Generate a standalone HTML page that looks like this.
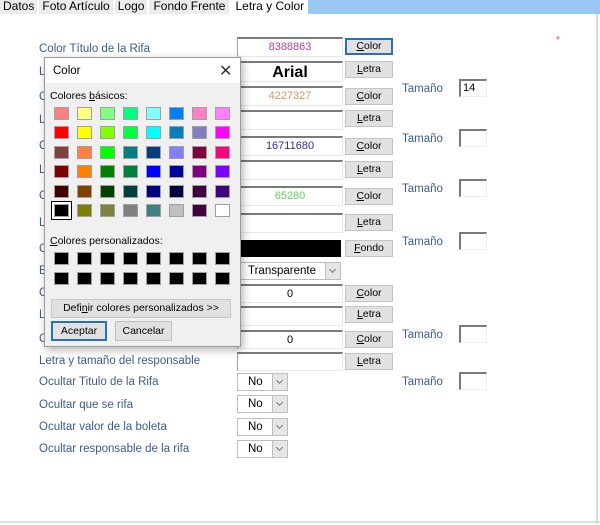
<!DOCTYPE html>
<html><head><meta charset="utf-8"><style>
*{margin:0;padding:0;box-sizing:border-box}
body{width:600px;height:525px;overflow:hidden;background:#fff;font-family:"Liberation Sans",sans-serif;position:relative}
.a{position:absolute}
.lbl{position:absolute;left:39px;font-size:11.5px;color:#3d5b8c;white-space:nowrap}
.box{position:absolute;left:237px;width:106px;background:#fff;border-top:2px solid #7a7a7a;border-left:1px solid #a0a0a0;border-right:1px solid #e8e8e8;border-bottom:1px solid #e8e8e8;font-size:11px;text-align:center;line-height:17px}
.btn{position:absolute;left:345px;width:48px;height:17px;background:#e1e1e1;border:1px solid #c4c4c4;font-size:10.5px;text-align:center;line-height:15px;color:#000}
.tam{position:absolute;left:402px;font-size:11.5px;color:#3d5b8c}
.tb{position:absolute;left:459px;width:28px;height:18px;border-top:2px solid #7a7a7a;border-left:2px solid #7a7a7a;border-right:1px solid #eee;border-bottom:1px solid #eee;background:#fff;font-size:11px;line-height:15px;padding-left:2px}
.sel{position:absolute;left:237px;width:51px;height:18px;border:1px solid #bdbdbd;background:#fff;font-size:11.5px;line-height:16px;padding-left:10px}
.sel i{position:absolute;right:0;top:0;width:15px;height:16px;background:#e6e6e6;border-left:1px solid #bdbdbd}
.sel i:after{content:"";position:absolute;left:4px;top:4px;width:4px;height:4px;border-right:1px solid #777;border-bottom:1px solid #777;transform:rotate(45deg)}
.sw{position:absolute;width:15px;height:13px;border:1px solid #a0a0a0}
</style></head><body>
<!-- tabs -->
<div class="a" style="left:0;top:0;width:600px;height:14px;background:#99c8f5"></div>
<div class="a" style="left:0;top:0;width:296px;height:14px;background:#fff"></div>
<div class="a" style="left:0;top:0;height:14px;font-size:12px;line-height:13px;color:#000;display:flex">
<span style="background:#ececec;padding:0 3px;margin-right:2px;height:14px">Datos</span>
<span style="background:#ececec;padding:0 3px;margin-right:2px">Foto Artículo</span>
<span style="background:#ececec;padding:0 3px;margin-right:2px">Logo</span>
<span style="background:#ececec;padding:0 4px;margin-right:2px">Fondo Frente</span>
<span style="background:#fff;padding:0 4px">Letra y Color</span>
</div>
<div class="a" style="left:596px;top:14px;width:2px;height:510px;background:#c8dcf0"></div>
<div class="a" style="left:0;top:521px;width:600px;height:2px;background:#ddd"></div>
<div class="a" style="left:556px;top:35px;color:#d05060;font-size:10px">*</div>

<!-- labels -->
<div class="lbl" style="top:43px">Color Título de la Rifa</div>
<div class="lbl" style="top:66px">Letra Título de la Rifa</div>
<div class="lbl" style="top:91px">Color que se rifa</div>
<div class="lbl" style="top:114px">Letra que se rifa</div>
<div class="lbl" style="top:140px">Color valor</div>
<div class="lbl" style="top:164px">Letra valor</div>
<div class="lbl" style="top:190px">Color fecha</div>
<div class="lbl" style="top:217px">Letra fecha</div>
<div class="lbl" style="top:243px">Color fondo</div>
<div class="lbl" style="top:265px">Estilo fondo</div>
<div class="lbl" style="top:287px">Color número</div>
<div class="lbl" style="top:309px">Letra número</div>
<div class="lbl" style="top:333px">Color responsable</div>
<div class="lbl" style="top:355px">Letra y tamaño del responsable</div>
<div class="lbl" style="top:376px">Ocultar Titulo de la Rifa</div>
<div class="lbl" style="top:399px">Ocultar que se rifa</div>
<div class="lbl" style="top:421px">Ocultar valor de la boleta</div>
<div class="lbl" style="top:443px">Ocultar responsable de la rifa</div>

<!-- boxes -->
<div class="box" style="top:37px;height:20px;color:#c040a0">8388863</div>
<div class="btn" style="top:38px;border:2px solid #2a70b8;line-height:13px"><u>C</u>olor</div>
<div class="box" style="top:61px;height:21px;font-weight:bold;font-size:16px;line-height:19px">Arial</div>
<div class="btn" style="top:61px"><u>L</u>etra</div>
<div class="box" style="top:86px;height:20px;color:#d09868">4227327</div>
<div class="btn" style="top:88px"><u>C</u>olor</div>
<div class="box" style="top:110px;height:20px"></div>
<div class="btn" style="top:110px"><u>L</u>etra</div>
<div class="box" style="top:136px;height:20px;color:#303090">16711680</div>
<div class="btn" style="top:138px"><u>C</u>olor</div>
<div class="box" style="top:160px;height:20px"></div>
<div class="btn" style="top:161px"><u>L</u>etra</div>
<div class="box" style="top:186px;height:20px;color:#60d060">65280</div>
<div class="btn" style="top:188px"><u>C</u>olor</div>
<div class="box" style="top:213px;height:20px"></div>
<div class="btn" style="top:214px"><u>L</u>etra</div>
<div class="a" style="left:237px;top:240px;width:104px;height:17px;background:#000"></div>
<div class="btn" style="top:240px"><u>F</u>ondo</div>
<div class="sel" style="top:262px;width:104px;padding-left:10px">Transparente<i></i></div>
<div class="box" style="top:284px;height:19px">0</div>
<div class="btn" style="top:285px"><u>C</u>olor</div>
<div class="box" style="top:306px;height:20px"></div>
<div class="btn" style="top:306px"><u>L</u>etra</div>
<div class="box" style="top:330px;height:19px">0</div>
<div class="btn" style="top:331px"><u>C</u>olor</div>
<div class="box" style="top:352px;height:19px"></div>
<div class="btn" style="top:353px"><u>L</u>etra</div>
<div class="sel" style="top:373px">No<i></i></div>
<div class="sel" style="top:395px">No<i></i></div>
<div class="sel" style="top:418px">No<i></i></div>
<div class="sel" style="top:440px">No<i></i></div>

<div class="tam" style="top:83px">Tamaño</div><div class="tb" style="top:79px">14</div>
<div class="tam" style="top:133px">Tamaño</div><div class="tb" style="top:129px"></div>
<div class="tam" style="top:183px">Tamaño</div><div class="tb" style="top:179px"></div>
<div class="tam" style="top:236px">Tamaño</div><div class="tb" style="top:232px"></div>
<div class="tam" style="top:329px">Tamaño</div><div class="tb" style="top:325px"></div>
<div class="tam" style="top:376px">Tamaño</div><div class="tb" style="top:372px"></div>

<!-- dialog -->
<div class="a" style="left:44px;top:57px;width:197px;height:290px;background:#f0f0f0;border:1px solid #9a9a9a;box-shadow:2px 3px 8px rgba(0,0,0,.3)">
<div class="a" style="left:0;top:0;width:195px;height:25px;background:#fff;font-size:11.5px;line-height:26px;padding-left:8px">Color</div>
<div class="a" style="left:174px;top:3px;font-size:16px;color:#333">✕</div>
<div class="a" style="left:5px;top:32px;font-size:10.5px">Colores <u>b</u>ásicos:</div>
<div class="a" style="left:5px;top:177px;font-size:10.5px"><u>C</u>olores personalizados:</div>
<div class="a" style="left:6px;top:241px;width:180px;height:19px;background:#e1e1e1;border:1px solid #c8c8c8;font-size:10.5px;text-align:center;line-height:17px">Defi<u>n</u>ir colores personalizados &gt;&gt;</div>
<div class="a" style="left:6px;top:263px;width:56px;height:20px;background:#e1e1e1;border:2px solid #2a70b8;font-size:10.5px;text-align:center;line-height:16px">Aceptar</div>
<div class="a" style="left:70px;top:263px;width:57px;height:20px;background:#e1e1e1;border:1px solid #c0c0c0;font-size:10.5px;text-align:center;line-height:18px">Cancelar</div>
</div>
<div class="a" style="left:44px;top:57px">
<div class="sw" style="left:10px;top:50px;background:#ff8080"></div><div class="sw" style="left:33px;top:50px;background:#ffff80"></div><div class="sw" style="left:56px;top:50px;background:#80ff80"></div><div class="sw" style="left:79px;top:50px;background:#00ff80"></div><div class="sw" style="left:102px;top:50px;background:#80ffff"></div><div class="sw" style="left:125px;top:50px;background:#0080ff"></div><div class="sw" style="left:148px;top:50px;background:#ff80c0"></div><div class="sw" style="left:171px;top:50px;background:#ff80ff"></div>
<div class="sw" style="left:10px;top:69px;background:#ff0000"></div><div class="sw" style="left:33px;top:69px;background:#ffff00"></div><div class="sw" style="left:56px;top:69px;background:#80ff00"></div><div class="sw" style="left:79px;top:69px;background:#00ff40"></div><div class="sw" style="left:102px;top:69px;background:#00ffff"></div><div class="sw" style="left:125px;top:69px;background:#0080c0"></div><div class="sw" style="left:148px;top:69px;background:#8080c0"></div><div class="sw" style="left:171px;top:69px;background:#ff00ff"></div>
<div class="sw" style="left:10px;top:89px;background:#804040"></div><div class="sw" style="left:33px;top:89px;background:#ff8040"></div><div class="sw" style="left:56px;top:89px;background:#00ff00"></div><div class="sw" style="left:79px;top:89px;background:#008080"></div><div class="sw" style="left:102px;top:89px;background:#004080"></div><div class="sw" style="left:125px;top:89px;background:#8080ff"></div><div class="sw" style="left:148px;top:89px;background:#800040"></div><div class="sw" style="left:171px;top:89px;background:#ff0080"></div>
<div class="sw" style="left:10px;top:108px;background:#800000"></div><div class="sw" style="left:33px;top:108px;background:#ff8000"></div><div class="sw" style="left:56px;top:108px;background:#008000"></div><div class="sw" style="left:79px;top:108px;background:#008040"></div><div class="sw" style="left:102px;top:108px;background:#0000ff"></div><div class="sw" style="left:125px;top:108px;background:#0000a0"></div><div class="sw" style="left:148px;top:108px;background:#800080"></div><div class="sw" style="left:171px;top:108px;background:#8000ff"></div>
<div class="sw" style="left:10px;top:128px;background:#400000"></div><div class="sw" style="left:33px;top:128px;background:#804000"></div><div class="sw" style="left:56px;top:128px;background:#004000"></div><div class="sw" style="left:79px;top:128px;background:#004040"></div><div class="sw" style="left:102px;top:128px;background:#000080"></div><div class="sw" style="left:125px;top:128px;background:#000040"></div><div class="sw" style="left:148px;top:128px;background:#400040"></div><div class="sw" style="left:171px;top:128px;background:#400080"></div>
<div class="a" style="left:7px;top:144px;width:21px;height:19px;border:1px solid #000;background:#fff"></div>
<div class="sw" style="left:10px;top:147px;background:#000"></div><div class="sw" style="left:33px;top:147px;background:#808000"></div><div class="sw" style="left:56px;top:147px;background:#808040"></div><div class="sw" style="left:79px;top:147px;background:#808080"></div><div class="sw" style="left:102px;top:147px;background:#408080"></div><div class="sw" style="left:125px;top:147px;background:#c0c0c0"></div><div class="sw" style="left:148px;top:147px;background:#400040"></div><div class="sw" style="left:171px;top:147px;background:#fff"></div>
<div class="sw" style="left:10px;top:195px;background:#000"></div><div class="sw" style="left:33px;top:195px;background:#000"></div><div class="sw" style="left:56px;top:195px;background:#000"></div><div class="sw" style="left:79px;top:195px;background:#000"></div><div class="sw" style="left:102px;top:195px;background:#000"></div><div class="sw" style="left:125px;top:195px;background:#000"></div><div class="sw" style="left:148px;top:195px;background:#000"></div><div class="sw" style="left:171px;top:195px;background:#000"></div>
<div class="sw" style="left:10px;top:215px;background:#000"></div><div class="sw" style="left:33px;top:215px;background:#000"></div><div class="sw" style="left:56px;top:215px;background:#000"></div><div class="sw" style="left:79px;top:215px;background:#000"></div><div class="sw" style="left:102px;top:215px;background:#000"></div><div class="sw" style="left:125px;top:215px;background:#000"></div><div class="sw" style="left:148px;top:215px;background:#000"></div><div class="sw" style="left:171px;top:215px;background:#000"></div>
</div>
</body></html>
